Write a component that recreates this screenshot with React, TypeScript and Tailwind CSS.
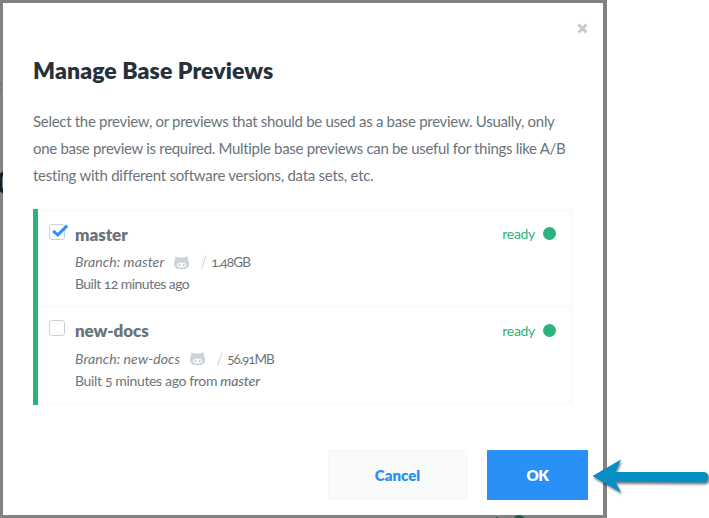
import type { ReactNode } from "react";

type PreviewProps = {
  name: ReactNode;
  branch: ReactNode;
  size: ReactNode;
  built: ReactNode;
  checked?: boolean;
};

function Checkbox({ checked }: { checked?: boolean }) {
  return (
    <span className="relative mt-[11.8px] ml-[11px] block h-4 w-4 shrink-0 rounded-[3px] border border-[#cdcfd1] bg-white">
      {checked && (
        <svg className="absolute -top-px left-[2px]" width="17" height="14" viewBox="0 0 17 14" fill="none">
          <path d="M1.2 6.8 L5.8 11 L15.2 1.6" stroke="#2890f7" strokeWidth="3" />
        </svg>
      )}
    </span>
  );
}

function Octoface({ className }: { className?: string }) {
  return (
    <svg className={className} width="15" height="14" viewBox="0 0 15 14">
      <path
        d="M1.4 .6C2.500 .6 3.700 1.100 4.600 1.800C6.500 1.500 8.500 1.500 10.400 1.800C11.300 1.100 12.500 .6 13.600 .6C14 1.700 14 2.700 13.800 3.600C14.700 4.700 15 5.800 15 7.200C15 11.800 12.300 13.200 7.500 13.200S0 11.800 0 7.200C0 5.800 .3 4.700 1.200 3.600C1 2.700 1 1.700 1.400 .6Z"
        fill="#cfd3d6"
      />
      <rect x="3.100" y="6.800" width="8.800" height="4.600" rx="2.200" fill="white" />
      <ellipse cx="5.300" cy="9" rx="1.100" ry="1.600" fill="#c9ced1" />
      <ellipse cx="9.700" cy="9" rx="1.100" ry="1.600" fill="#c9ced1" />
    </svg>
  );
}

function Preview({ name, branch, size, built, checked }: PreviewProps) {
  return (
    <div className="flex h-[96.4px] border-b-[3px] border-[#fafafa]">
      <Checkbox checked={checked} />
      <div className="ml-[10px] flex-1 pt-[10.6px] text-[14px] text-[#6b747a]">
        <div className="h-[28.6px] text-[17px] leading-[24px] font-extrabold">{name}</div>
        <div className="flex h-[22px] items-center leading-[22px] whitespace-nowrap">
          {branch}
          <Octoface className="mt-px ml-[9.5px]" />
          <svg className="ml-[12px]" width="6" height="14" viewBox="0 0 6 14">
            <path d="M.7 13.5L5 .5" stroke="#cbced0" />
          </svg>
          <span className="ml-[4.5px]">{size}</span>
        </div>
        <div className="leading-[22px] whitespace-nowrap oldstyle-nums">{built}</div>
      </div>
      <div className="flex h-[26px] items-center pt-[17.6px] pr-[14px] text-[14px] text-[#29b47c]">
        <span className="tracking-[-0.3px]">ready</span>
        <span className="ml-2 h-[13px] w-[13px] rounded-full bg-[#29b47c]" />
      </div>
    </div>
  );
}

export default function App() {
  return (
    <div className="relative h-[518px] w-[709px] overflow-hidden bg-white font-['Lato',sans-serif]">
      <div className="relative h-[518px] w-[607px] overflow-hidden bg-[#828282] pt-[3px] pl-[3px]">
        <span className="absolute top-[83px] left-0 h-[2px] w-px bg-[#4c7795]" />
        <span className="absolute top-[89px] left-0 h-[2px] w-px bg-[#4c7795]" />
        <span className="absolute top-[171px] left-[-2px] h-[23px] w-[19px] rounded-[8px] border-[4px] border-[#142027]" />
        <span className="absolute top-[515px] left-[513px] h-[12px] w-[12px] rounded-full bg-[#175f42]" />
        <span className="absolute top-[517px] left-[496px] h-px w-[2px] bg-[#175f42]" />
        <div className="relative flex h-[512px] w-[600px] flex-col bg-white px-[30px]">
          <svg className="absolute top-[20px] left-[574px]" width="11" height="11" viewBox="0 0 11 11">
            <path d="M1.5 1.5L9.5 9.5M9.5 1.5L1.5 9.5" stroke="#c8c8c8" strokeWidth="2.9" />
          </svg>
          <h1 className="mt-[51px] h-8 text-[23px] leading-8 font-extrabold tracking-[0.1px] whitespace-nowrap text-[#263139]">
            Manage Base Previews
          </h1>
          <p className="mt-[22px] text-[15px] leading-[27px] whitespace-nowrap text-[#6b747a]">
            <span className="tracking-[-0.3px]">Select the preview, or previews that should be used as a base preview. Usually, only</span>
            <br />
            <span className="tracking-[-0.31px]">one base preview is required. Multiple base previews can be useful for things like A/B</span>
            <br />
            <span className="tracking-[-0.25px]">testing with different software versions, data sets, etc.</span>
          </p>
          <div className="mt-[20px] h-[196px] w-[540px] border-l-[5px] border-[#29b47c]">
            <div className="border-t-[3px] border-r-[3px] border-[#fafafa]">
              <Preview
                checked
                name={<span className="tracking-[-0.05px]">master</span>}
                branch={<i className="tracking-[0.1px]">Branch: master</i>}
                size={<span className="text-[13.5px] tracking-[-0.8px] oldstyle-nums">1.48GB</span>}
                built={<span className="tracking-[-0.55px]">Built 12 minutes ago</span>}
              />
              <Preview
                name={<span className="tracking-[-0.1px]">new-docs</span>}
                branch={<i className="tracking-[0.1px]">Branch: new-docs</i>}
                size={<span className="text-[13.5px] tracking-[-1px] oldstyle-nums">56.91MB</span>}
                built={
                  <span className="tracking-[-0.35px]">
                    Built 5 minutes ago from <i className="font-medium tracking-[-0.1px]">master</i>
                  </span>
                }
              />
            </div>
          </div>
          <div className="mt-[45px] -mr-[15px] flex justify-end gap-5 text-[15px] font-extrabold">
            <button className="h-[50px] w-[139px] border border-[#f5f6f6] bg-[#f9fafa] text-[#2890f7]">Cancel</button>
            <button className="h-[50px] w-[101px] bg-[#2890f7] tracking-[-0.5px] text-white">OK</button>
          </div>
        </div>
      </div>
      <svg className="absolute top-[455px] left-[589px] drop-shadow-[1px_2px_1px_rgba(0,0,0,0.5)]" width="120" height="48" viewBox="0 0 120 48">
        <path d="M3.5 21L32 4.5L26.5 17H114Q119.500 17 119.500 22.500Q119.500 27.500 114 27.500L26.500 27L32 37.500Z" fill="#078ec5" />
      </svg>
    </div>
  );
}
